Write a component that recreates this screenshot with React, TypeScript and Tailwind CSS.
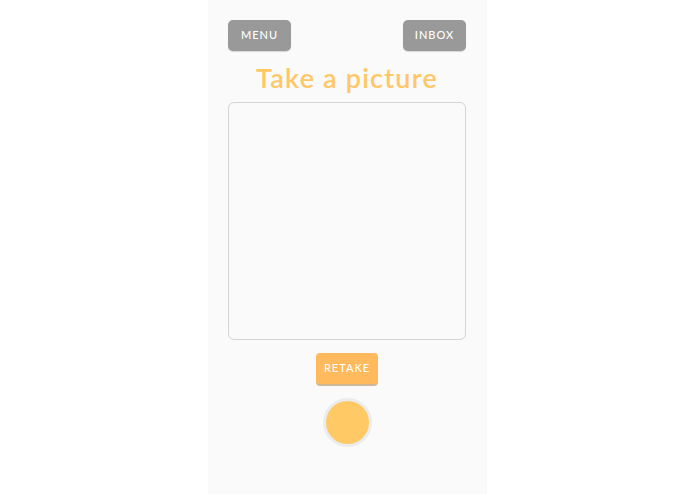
import React from 'react';

const App: React.FC = () => {
  return (
    <div className="flex min-h-[494px] w-full justify-center bg-white">
      <div className="flex w-[279px] flex-col items-center bg-[#fafafa] pl-5 pr-[21px] pt-5 font-['Lato',sans-serif]">
        {/* Top bar */}
        <div className="flex w-full justify-between">
          <button className="h-[31px] w-[63px] rounded-[5px] bg-[#999999] text-[11px] font-medium tracking-[1px] text-white shadow-[0_1px_1px_rgba(0,0,0,0.15)]">
            MENU
          </button>
          <button className="h-[31px] w-[63px] rounded-[5px] bg-[#999999] text-[11px] font-medium tracking-[1px] text-white shadow-[0_1px_1px_rgba(0,0,0,0.15)]">
            INBOX
          </button>
        </div>

        <h1 className="mt-[9px] text-[27px] font-semibold leading-[36px] tracking-[1.2px] text-[#ffc766]">
          Take a picture
        </h1>

        {/* Camera preview */}
        <div className="mt-[6px] h-[238px] w-[238px] rounded-[6px] border border-[#d4d4d4] bg-[#fafafa]" />

        <button className="mt-[13px] h-[31px] w-[62px] rounded-[4px] bg-[#ffba5e] text-[11px] tracking-[1px] text-white shadow-[0_2px_0_rgba(170,130,70,0.55)]">
          RETAKE
        </button>

        {/* Shutter */}
        <button className="mt-[14px] h-[49px] w-[49px] rounded-full border-[3px] border-[#ececec] bg-[#ffc966]" />
      </div>
    </div>
  );
};

export default App;
